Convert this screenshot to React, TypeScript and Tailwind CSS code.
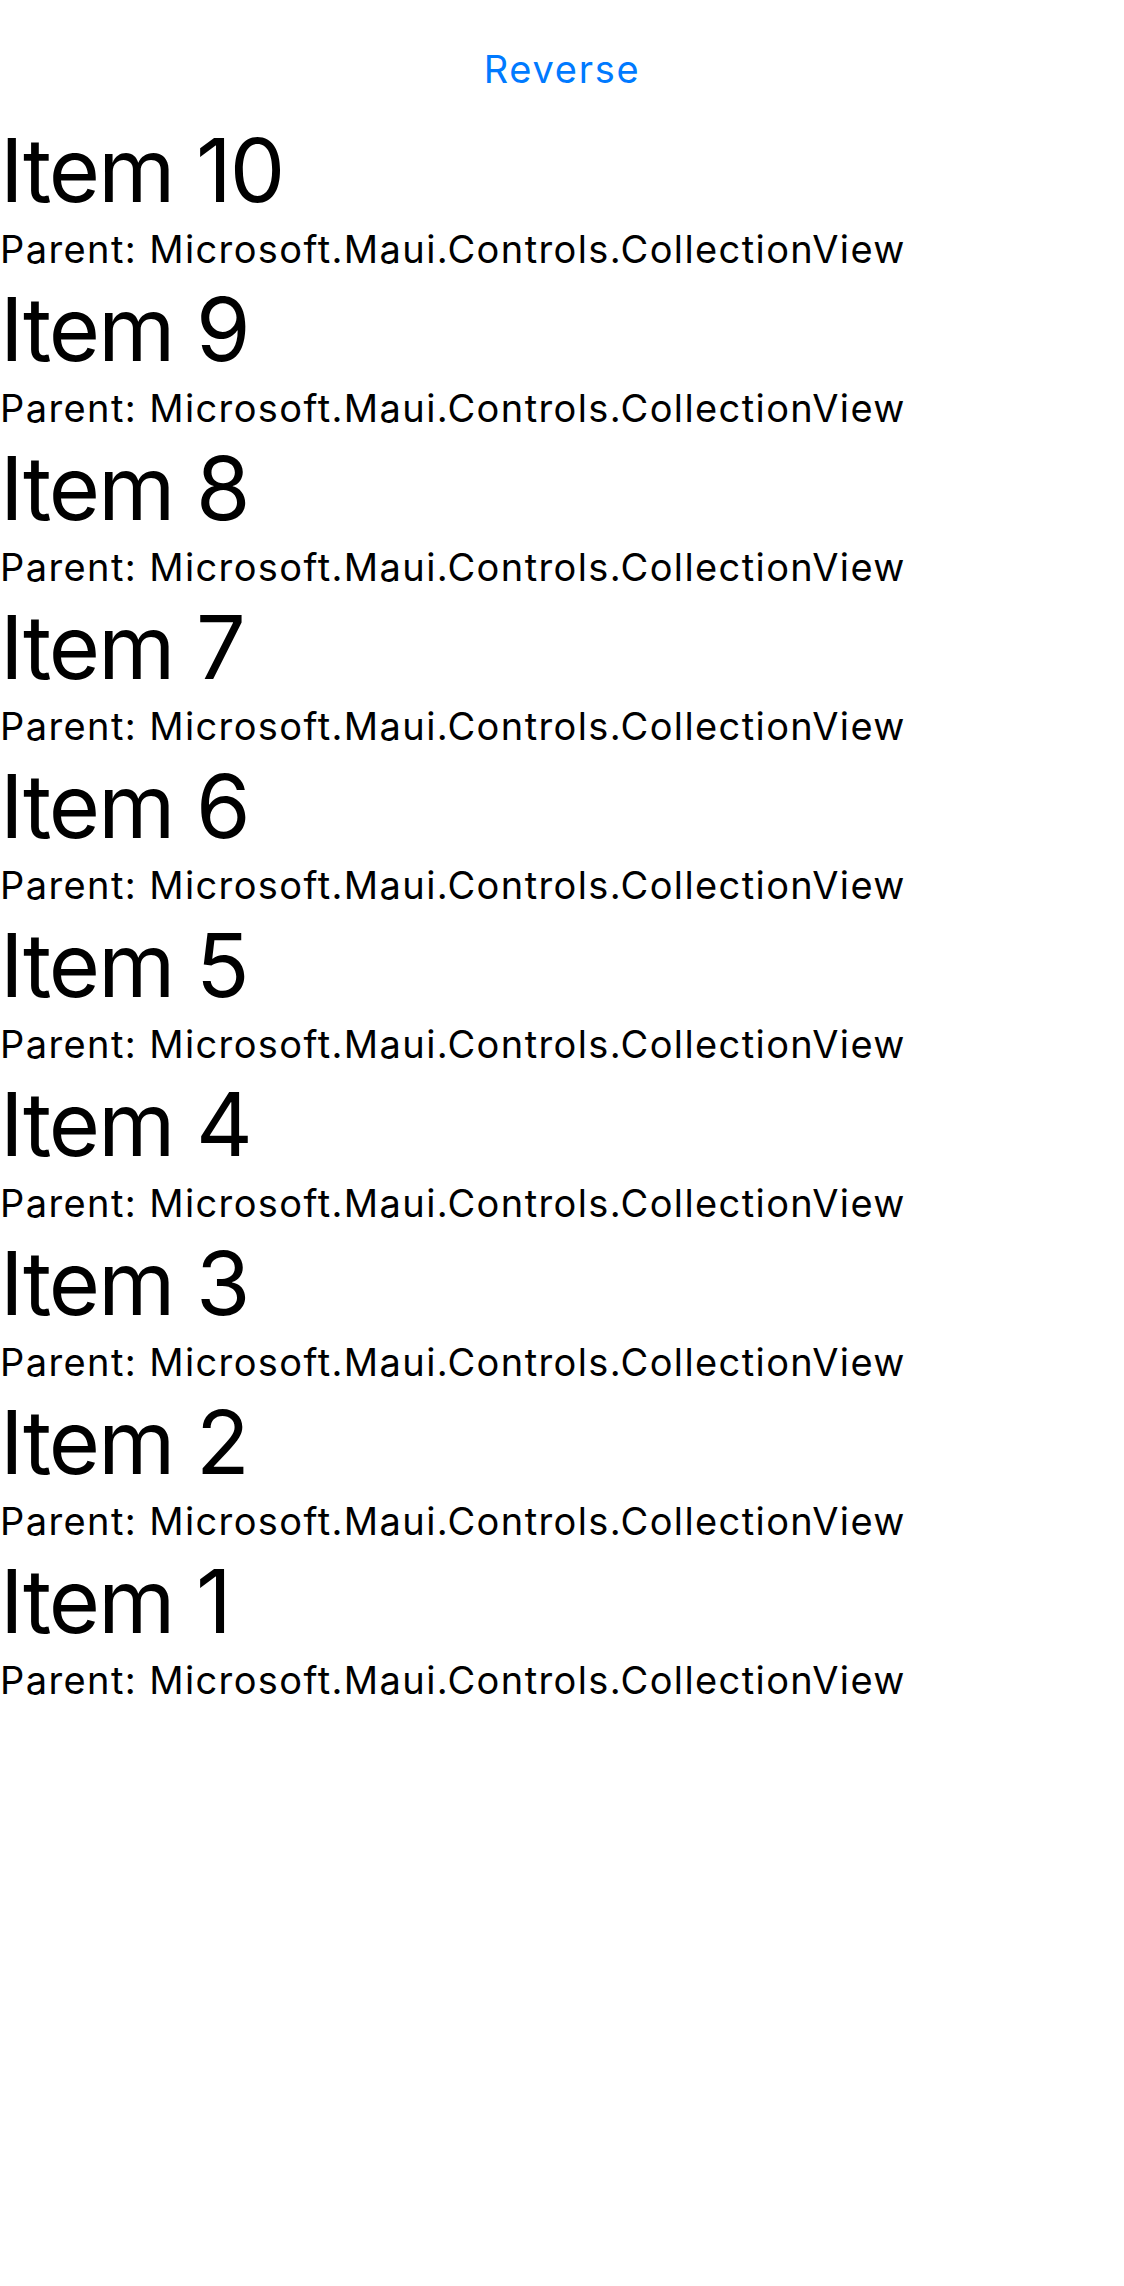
const ITEMS = [10, 9, 8, 7, 6, 5, 4, 3, 2, 1];

const PARENT_NAME = 'Microsoft.Maui.Controls.CollectionView';

const ItemRow = ({ index }: { index: number }): React.ReactElement => (
	<div className="flex flex-col">
		<span className="block text-[88px] leading-[106px] tracking-[-2px] text-black">
			Item {index}
		</span>
		<span className="block text-[38px] leading-[53px] tracking-[1.4px] text-black">
			Parent: {PARENT_NAME}
		</span>
	</div>
);

export default function App(): React.ReactElement {
	return (
		<div
			className="min-h-[2286px] w-[1124px] bg-white"
			style={{ fontFamily: 'Inter, "Noto Sans", sans-serif' }}
		>
			<div className="flex justify-center pt-[46px] pb-[25px]">
				<button
					type="button"
					className="text-[38px] leading-[46px] tracking-[1.7px] text-[#007AFF]"
				>
					Reverse
				</button>
			</div>
			<div className="flex flex-col">
				{ITEMS.map((index) => (
					<ItemRow key={index} index={index} />
				))}
			</div>
		</div>
	);
}
